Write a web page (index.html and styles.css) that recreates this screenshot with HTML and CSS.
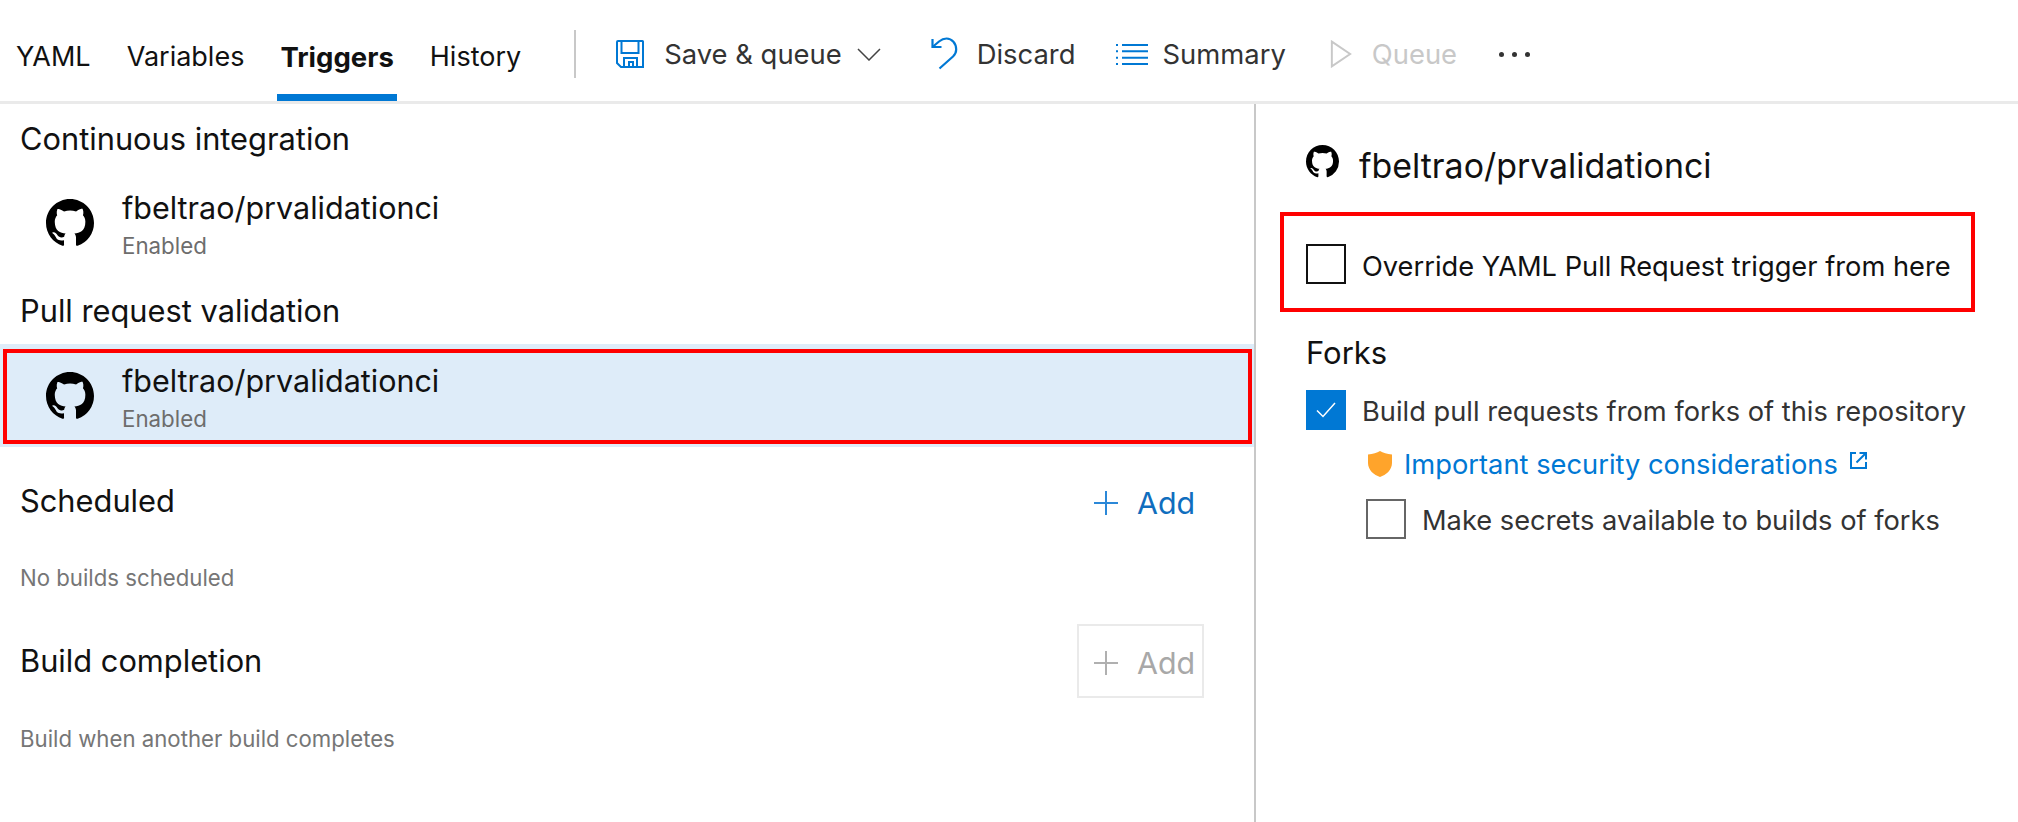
FILE: index.html

```html
<!DOCTYPE html>
<html lang="en">
<head>
  <meta charset="UTF-8" />
  <title>Triggers</title>
  <link rel="stylesheet" href="styles.css">
</head>
<body>
  <svg class="defs" width="0" height="0">
    <symbol id="octocat" viewBox="0 0 16 16">
      <path fill-rule="evenodd" d="M8 0C3.58 0 0 3.58 0 8c0 3.54 2.29 6.53 5.47 7.59.4.07.55-.17.55-.38 0-.19-.01-.82-.01-1.49-2.01.37-2.53-.49-2.69-.94-.09-.23-.48-.94-.82-1.13-.28-.15-.68-.52-.01-.53.63-.01 1.08.58 1.23.82.72 1.21 1.87.87 2.33.66.07-.52.28-.87.51-1.07-1.78-.2-3.64-.89-3.64-3.95 0-.87.31-1.59.82-2.15-.08-.2-.36-1.02.08-2.12 0 0 .67-.21 2.2.82.64-.18 1.32-.27 2-.27s1.36.09 2 .27c1.53-1.04 2.2-.82 2.2-.82.44 1.1.16 1.92.08 2.12.51.56.82 1.27.82 2.15 0 3.07-1.87 3.75-3.65 3.95.29.25.54.73.54 1.48 0 1.07-.01 1.93-.01 2.2 0 .21.15.46.55.38A8.01 8.01 0 0 0 16 8c0-4.42-3.58-8-8-8z"/>
    </symbol>
  </svg>

  <header class="topbar">
    <nav class="tabs">
      <a class="tab">YAML</a>
      <a class="tab">Variables</a>
      <a class="tab tab-active">Triggers</a>
      <a class="tab">History</a>
    </nav>
    <div class="divider"></div>
    <div class="actions">
      <a class="action action-save">
        <svg class="action-icon" viewBox="0 0 28 28" fill="none" stroke="#0078d4" stroke-width="2">
          <path d="M2 1h24.500a.500.500 0 0 1 .500.500v25.500h-22l-4-4v-21a1 1 0 0 1 1-1z"/>
          <path d="M5.500 1v12h17v-12"/>
          <path d="M8 27v-9h13v9"/>
          <path d="M13 27v-5h4v5"/>
        </svg>
        <span>Save &amp; queue</span>
        <svg class="caret" viewBox="0 0 24 13" fill="none" stroke="#444" stroke-width="1.500"><path d="M1 1l11 11 11-11"/></svg>
      </a>
      <a class="action action-discard">
        <svg class="action-icon discard-icon" viewBox="0 0 28 34" fill="none" stroke="#0078d4" stroke-width="2.200">
          <path d="M2.500 2v8h9"/>
          <path d="M2.500 10L9 4.500C11.500 2.500 14 1.500 16.500 1.500 22 1.500 26.200 6.500 26.200 12.500 26.200 15.500 25 17.500 23 19.500L9.500 31.500"/>
        </svg>
        <span>Discard</span>
      </a>
      <a class="action action-summary">
        <svg class="action-icon summary-icon" viewBox="0 0 32 21" fill="none" stroke="#0078d4" stroke-width="2">
          <path d="M6 1h26M6 7.330h26M6 13.670h26M6 20h26"/>
          <path d="M0 1h2M0 7.330h2M0 13.670h2M0 20h2"/>
        </svg>
        <span>Summary</span>
      </a>
      <a class="action action-queue">
        <svg class="action-icon queue-icon" viewBox="0 0 20 26" fill="none" stroke="#c8c8c8" stroke-width="1.800"><path d="M1.500 1.500l17 11.500-17 11.500z"/></svg>
        <span>Queue</span>
      </a>
      <span class="more"><i></i><i></i><i></i></span>
    </div>
  </header>

  <main class="layout">
    <section class="left">
      <h2 class="group-title first">Continuous integration</h2>
      <div class="repo-row">
        <svg class="repo-icon"><use href="#octocat"/></svg>
        <div>
          <div class="repo-name">fbeltrao/prvalidationci</div>
          <div class="repo-state">Enabled</div>
        </div>
      </div>

      <h2 class="group-title pr-title">Pull request validation</h2>
      <div class="repo-selected">
        <div class="repo-row repo-highlight">
          <svg class="repo-icon"><use href="#octocat"/></svg>
          <div>
            <div class="repo-name">fbeltrao/prvalidationci</div>
            <div class="repo-state">Enabled</div>
          </div>
        </div>
      </div>

      <div class="group-head scheduled">
        <h2 class="group-title">Scheduled</h2>
        <a class="add-btn">
          <svg viewBox="0 0 24 24" stroke="#2b88d8" stroke-width="2"><path d="M12 0v24M0 12h24"/></svg>
          <span>Add</span>
        </a>
      </div>
      <p class="hint">No builds scheduled</p>

      <div class="group-head completion">
        <h2 class="group-title">Build completion</h2>
        <a class="add-btn add-disabled">
          <svg viewBox="0 0 24 24" stroke="#b0b0b0" stroke-width="2"><path d="M12 0v24M0 12h24"/></svg>
          <span>Add</span>
        </a>
      </div>
      <p class="hint hint-completion">Build when another build completes</p>
    </section>

    <aside class="right">
      <div class="panel-title">
        <svg class="panel-icon"><use href="#octocat"/></svg>
        <span>fbeltrao/prvalidationci</span>
      </div>

      <div class="override-box">
        <span class="check check-dark"></span>
        <span class="check-label label-dark">Override YAML Pull Request trigger from here</span>
      </div>

      <h3 class="forks-title">Forks</h3>
      <div class="check-row">
        <span class="check check-on">
          <svg viewBox="0 0 20 16" fill="none" stroke="#fff" stroke-width="1.500"><path d="M1 8.500l6 6 12-13.500"/></svg>
        </span>
        <span class="check-label">Build pull requests from forks of this repository</span>
      </div>
      <div class="security">
        <svg class="shield" viewBox="0 0 24 26"><path fill="#ffa42b" d="M12 0C15 2 19 3 24 3.500V12C24 19 18 24 12 26 6 24 0 19 0 12V3.500C5 3 9 2 12 0z"/></svg>
        <a class="link">Important security considerations</a>
        <svg class="external" viewBox="0 0 17 17" fill="none" stroke="#0078d4" stroke-width="2"><path d="M6 1H1v15h15v-6"/><path d="M9.500 1h6.500v6.500"/><path d="M6.500 10.500L16 1"/></svg>
      </div>
      <div class="check-row nested">
        <span class="check"></span>
        <span class="check-label">Make secrets available to builds of forks</span>
      </div>
    </aside>
  </main>
</body>
</html>
```

FILE: styles.css

```css
* {
  box-sizing: border-box;
}

html, body {
  height: 100%;
}

body {
  margin: 0;
  background: #fff;
  color: #111;
  font-family: Inter, "Noto Sans", sans-serif;
  font-size: 28px;
  overflow: hidden;
}

.defs {
  position: absolute;
}

/* Barra superior */
.topbar {
  height: 104px;
  display: flex;
  align-items: flex-start;
  border-bottom: 3px solid #eaeaea;
}

.tabs {
  display: flex;
  height: 101px;
  padding-left: 13px;
}

.tab {
  height: 101px;
  padding: 37px 3px 0;
  margin-right: 30px;
  font-size: 27px;
  line-height: 40px;
  white-space: nowrap;
}

.tab-active {
  font-size: 27.5px;
  font-weight: 700;
  border-bottom: 7px solid #0078d4;
}

.divider {
  width: 2px;
  height: 48px;
  margin: 30px 0 0 20px;
  background: #c8c8c8;
}

.actions {
  display: flex;
  align-items: center;
  height: 101px;
  padding-top: 7px;
  font-size: 27.4px;
  color: #333;
}

.action {
  display: flex;
  align-items: center;
  white-space: nowrap;
}

.action-icon {
  width: 28px;
  height: 28px;
  margin-right: 20px;
}

.caret {
  width: 24px;
  height: 13px;
  margin-left: 15px;
}

.action-save { margin-left: 40px; }
.action-discard { margin-left: 49px; }
.action-summary { margin-left: 40px; }
.action-queue { margin-left: 41px; color: #c8c8c8; }

.discard-icon {
  width: 28px;
  height: 34px;
  margin-right: 19px;
}

.summary-icon {
  width: 32px;
  height: 21px;
  margin-right: 15px;
}

.queue-icon {
  margin-right: 17px;
}

.more {
  display: flex;
  gap: 8px;
  margin-left: 42px;
}

.more i {
  width: 5px;
  height: 5px;
  border-radius: 50%;
  background: #333;
}

/* Area principal */
.layout {
  display: flex;
  height: 718px;
}

.left {
  width: 1256px;
  flex: none;
  border-right: 2px solid #c8c8c8;
}

.group-title {
  margin: 0;
  padding-left: 20px;
  font-size: 30.8px;
  font-weight: 400;
  line-height: 40px;
}

.group-title.first { margin-top: 15px; }
.pr-title { margin-top: 20px; }

.repo-row {
  display: flex;
  align-items: center;
  height: 95px;
  margin-top: 17px;
  padding-left: 46px;
}

.repo-icon {
  width: 48px;
  height: 48px;
  margin: 0 28px 2px 0;
}

.repo-name {
  font-size: 30.5px;
  line-height: 40px;
}

.repo-state {
  margin-top: 5px;
  font-size: 22.3px;
  line-height: 26px;
  color: #6d6d6d;
}

.repo-selected {
  height: 103px;
  margin-top: 13px;
  padding: 5px 0 3px 3px;
  background: #deecf9;
}

.repo-highlight {
  width: 1249px;
  margin-top: 0;
  padding-left: 39px;
  border: 4px solid #f00;
}

.group-head {
  display: flex;
  align-items: center;
  justify-content: space-between;
  padding-right: 50px;
}

.scheduled {
  height: 74px;
  margin-top: 17px;
}

.completion {
  height: 74px;
  margin-top: 32px;
}

.add-btn {
  display: flex;
  align-items: center;
  width: 127px;
  height: 74px;
  padding: 4px 0 0 15px;
  border: 2px solid transparent;
  color: #106ebe;
  font-size: 30.4px;
}

.add-btn svg {
  width: 24px;
  height: 24px;
  margin-right: 19px;
}

.add-disabled {
  border-color: #eaeaea;
  color: #a8a8a8;
}

.hint {
  margin: 26px 0 0;
  padding-left: 20px;
  font-size: 22.2px;
  line-height: 28px;
  color: #767676;
}

.hint-completion { margin-top: 27px; }

/* Painel da direita */
.right {
  flex: 1;
  padding-left: 25px;
}

.panel-title {
  display: flex;
  align-items: flex-start;
  margin-top: 41px;
  padding-left: 25px;
  font-size: 33.9px;
  line-height: 42px;
}

.panel-icon {
  width: 33px;
  height: 33px;
  margin-right: 20px;
}

.override-box {
  display: flex;
  align-items: center;
  width: 695px;
  height: 100px;
  margin: 25px 0 0 -1px;
  padding: 4px 0 0 22px;
  border: 4px solid #f00;
}

.check {
  width: 40px;
  height: 40px;
  flex: none;
  border: 2px solid #666;
  background: #fff;
}

.check-dark {
  border-color: #111;
}

.check-label {
  margin-left: 16px;
  padding-top: 5px;
  font-size: 27.25px;
  line-height: 36px;
  color: #333;
  white-space: nowrap;
}

.label-dark {
  color: #111;
}

.forks-title {
  margin: 21px 0 0;
  padding-left: 25px;
  font-size: 31px;
  font-weight: 400;
  line-height: 40px;
}

.check-row {
  display: flex;
  align-items: center;
  margin-top: 16px;
  padding-left: 25px;
}

.check-on {
  display: flex;
  align-items: center;
  justify-content: center;
  border: 0;
  background: #0078d4;
}

.check-on svg {
  width: 20px;
  height: 16px;
}

.security {
  display: flex;
  align-items: center;
  height: 36px;
  margin-top: 16px;
  padding-left: 86px;
}

.shield {
  width: 26px;
  height: 26px;
  margin-right: 11px;
}

.link {
  font-size: 27.3px;
  color: #0078d4;
  white-space: nowrap;
}

.external {
  width: 17px;
  height: 17px;
  margin-left: 12px;
  margin-bottom: 8px;
}

.nested {
  margin-top: 16px;
  padding-left: 85px;
}
```
